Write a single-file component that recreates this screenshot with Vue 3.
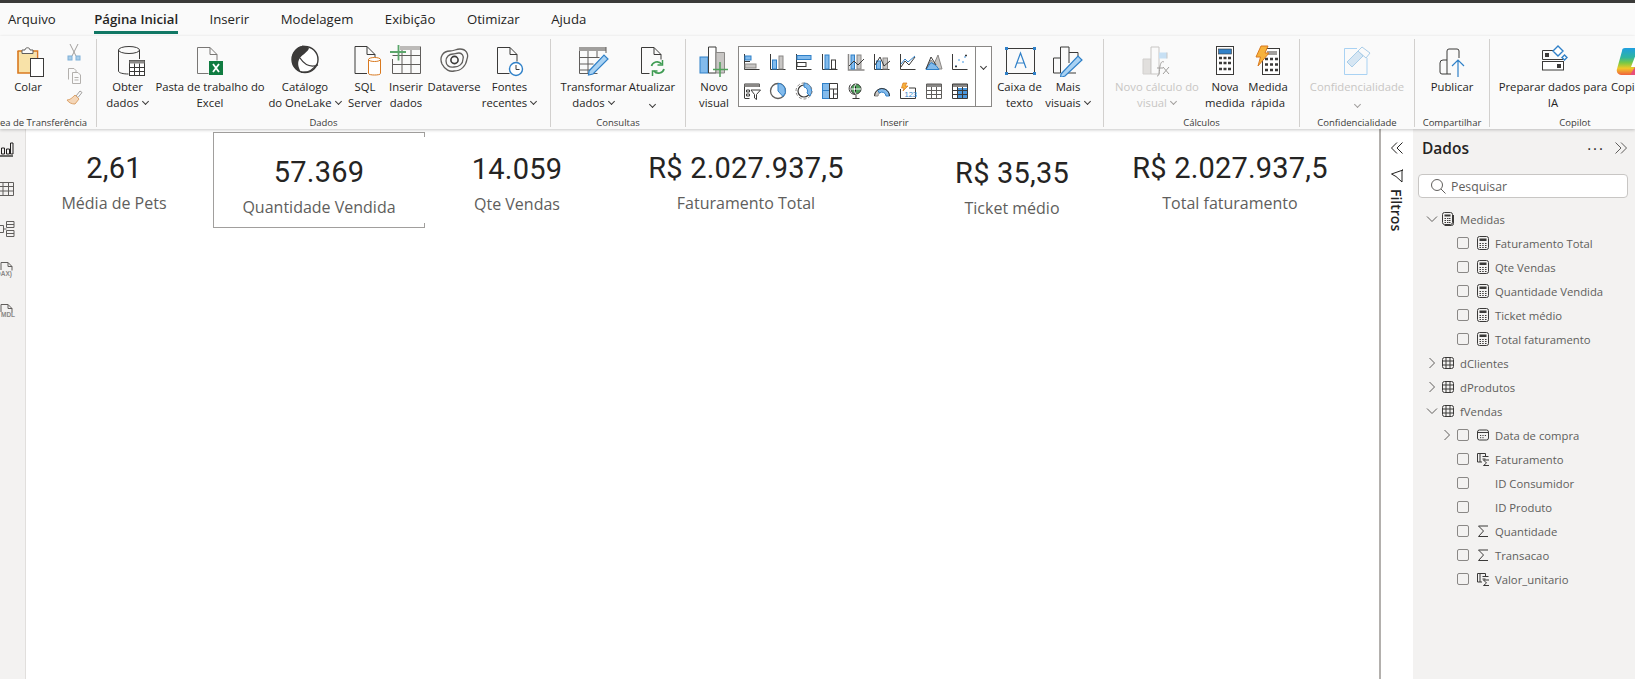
<template>
  <div class="app">
    <svg class="defs" width="0" height="0" aria-hidden="true">
      <symbol id="i-calc" viewBox="0 0 14 14">
        <rect x="1.500" y="0.500" width="11" height="13" rx="2" fill="none" stroke="#3b3a39" />
        <rect x="3.500" y="2.500" width="7" height="2.500" fill="#3b3a39" />
        <path d="M3.500 7.500h1.500M6.200 7.500h1.500M9 7.500h1.500M3.500 9.500h1.500M6.200 9.500h1.500M9 9.500h1.500M3.500 11.500h1.500M6.200 11.500h1.500M9 11.500h1.500" stroke="#3b3a39" />
      </symbol>
      <symbol id="i-calcs" viewBox="0 0 14 14">
        <rect x="1.500" y="0.500" width="10" height="12" rx="2" fill="none" stroke="#3b3a39" />
        <path d="M3.500 13.500h7a2 2 0 0 0 2-2V3" fill="none" stroke="#3b3a39" />
        <rect x="3.500" y="2.500" width="6" height="2" fill="#3b3a39" />
        <path d="M3.500 6.500h1.500M6 6.500h1.500M8 6.500h1.500M3.500 8.500h1.500M6 8.500h1.500M8 8.500h1.500M3.500 10.500h1.500M6 10.500h1.500M8 10.500h1.500" stroke="#3b3a39" />
      </symbol>
      <symbol id="i-table" viewBox="0 0 14 14">
        <rect x="1.500" y="1.500" width="11" height="11" rx="2" fill="none" stroke="#3b3a39" />
        <path d="M5 1.500v11M9 1.500v11M1.500 5h11M1.500 9h11" stroke="#3b3a39" />
      </symbol>
      <symbol id="i-date" viewBox="0 0 14 14">
        <rect x="1.500" y="2" width="11" height="10" rx="2" fill="none" stroke="#3b3a39" />
        <path d="M1.500 4.500h11M4 7.500h1.200M6.400 7.500h1.200M8.800 7.500h1.200M4 9.700h1.200M6.400 9.700h1.200" stroke="#3b3a39" />
      </symbol>
      <symbol id="i-col" viewBox="0 0 14 14">
        <path d="M1.500 10V1.500h8v3M4 10V1.500M1.500 10H6M6.500 4.500h6M6.500 7h3" fill="none" stroke="#3b3a39" />
        <path d="M13 8H7.500l3 3-3 2.500H13" fill="none" stroke="#3b3a39" />
      </symbol>
      <symbol id="i-sum" viewBox="0 0 14 14">
        <path d="M12 2H2.500l5 5-5 5.500H12" fill="none" stroke="#3b3a39" />
      </symbol>
    </svg>

    <div class="topbar"></div>

    <nav class="tabs">
      <span v-for="tab in tabs" :key="tab" class="tab" :class="{ active: tab === 'Página Inicial' }">{{ tab }}</span>
    </nav>

    <div class="ribbon">
      <section class="group g-clip">
        <div class="items">
          <div class="btn b-colar">
            <svg class="ico" width="32" height="32" viewBox="0 0 32 32">
              <path d="M6 6h18v22H6z" fill="#f8e2a8" />
              <path d="M6 6v22h12" fill="none" stroke="#d9791f" stroke-width="1.600" />
              <path d="M5.500 6H10M20 6h5.500v8" fill="none" stroke="#d9791f" stroke-width="1.600" />
              <path d="M10 8.500V5h3c0-3 5-3 5 0h3v3.500z" fill="#fafafa" stroke="#605e5c" />
              <rect x="18.500" y="13.500" width="13" height="18" fill="#fff" stroke="#3b3a39" />
            </svg>
            <div class="lbl">Colar</div>
          </div>
          <div class="small-col">
            <svg width="16" height="20" viewBox="0 0 16 20">
              <path d="M4 1l6 12M12 1L6 13" stroke="#a19f9d" fill="none" />
              <rect x="2" y="13" width="4" height="4" fill="#a9cde8" stroke="#7fb0d8" />
              <rect x="10" y="13" width="4" height="4" fill="#a9cde8" stroke="#7fb0d8" />
            </svg>
            <svg width="16" height="18" viewBox="0 0 16 18">
              <path d="M2.500 12.500V1.500H8l2 2v2" fill="none" stroke="#b3b0ad" />
              <path d="M6.500 5.500H12l2.500 2.500v8.500h-8zM8.500 10.500h4M8.500 13h4" fill="#fafafa" stroke="#b3b0ad" />
            </svg>
            <svg width="18" height="18" viewBox="0 0 18 18">
              <path d="M11 7l4-5 2 1.500-4 5z" fill="none" stroke="#a19f9d" />
              <path d="M10 6l4 4-4 5c-3 0-6-1-8-4 3 0 5-2 8-5z" fill="#f4d6b8" stroke="#dca36b" />
            </svg>
          </div>
        </div>
        <div class="group-label">Área de Transferência</div>
      </section>

      <section class="group g-dados">
        <div class="items">
          <div class="btn b-obter">
            <svg class="ico" width="36" height="32" viewBox="0 0 36 32">
              <ellipse cx="19" cy="5" rx="10.500" ry="3.500" fill="none" stroke="#3b3a39" />
              <path d="M8.500 5v21c0 2 5 3 10 3M29.500 5v9" fill="none" stroke="#3b3a39" />
              <rect x="19.500" y="15.500" width="15" height="15" fill="#fff" stroke="#3b3a39" />
              <path d="M19.500 15.500h15v3h-15z" fill="#8a8886" />
              <path d="M24.500 18.500v12M29.500 18.500v12M19.500 22.500h15M19.500 26.500h15" stroke="#3b3a39" />
            </svg>
            <div class="lbl">Obter<br />dados<i class="caret"></i></div>
          </div>
          <div class="btn b-pasta">
            <svg class="ico" width="28" height="32" viewBox="0 0 28 32">
              <path d="M1.500 28.500V2.500H14l7 7v6M14 2.500v7h7M1.500 28.500h11" fill="none" stroke="#797775" />
              <rect x="13" y="16" width="14" height="14" fill="#107c41" />
              <path d="M17 19l6 8M23 19l-6 8" stroke="#fff" stroke-width="1.800" />
            </svg>
            <div class="lbl">Pasta de trabalho do<br />Excel</div>
          </div>
          <div class="btn b-cat">
            <svg class="ico" width="32" height="32" viewBox="0 0 32 32">
              <circle cx="16" cy="14.500" r="13" fill="#fff" stroke="#3b3a39" stroke-width="1.400" />
              <path d="M13 1C7 2 3 8 3 14.500c0 6 4 11 9 12.500-3-5-4-10-1-14 3-4 8-6 9-10-2-1.500-4-2.500-7-2.500z" fill="#3b3a39" />
              <path d="M11 13c4 6 10 10 18 7M12 27c6 1 12-2 16-8" fill="none" stroke="#3b3a39" stroke-width="1.300" />
            </svg>
            <div class="lbl">Catálogo<br />do OneLake<i class="caret"></i></div>
          </div>
          <div class="btn b-sql">
            <svg class="ico" width="36" height="32" viewBox="0 0 36 32">
              <path d="M8 28.500V1.500H20l8 8v3M20 1.500v8h8M8 28.500h12" fill="none" stroke="#3b3a39" />
              <path d="M21.500 14.500v14c0 2 12 2 12 0v-14" fill="#fff" stroke="#d9791f" />
              <ellipse cx="27.500" cy="14.500" rx="6" ry="2" fill="#fff" stroke="#d9791f" />
            </svg>
            <div class="lbl">SQL<br />Server</div>
          </div>
          <div class="btn b-ins">
            <svg class="ico" width="32" height="32" viewBox="0 0 32 32">
              <path d="M10 1h20v4H10z" fill="#bdbbb9" />
              <path d="M2.500 14v14.500h28V1.500M2.500 10.500h28M2.500 19.500h28M12 5v23.500M21 5v23.500" fill="none" stroke="#605e5c" />
              <path d="M8.500 0v15.500M0 7h16" stroke="#5ba66b" stroke-width="1.800" />
            </svg>
            <div class="lbl">Inserir<br />dados</div>
          </div>
          <div class="btn b-dv">
            <svg class="ico" width="30" height="32" viewBox="0 0 30 32">
              <path d="M3 19C0 12 4 6 11 6c4 0 6-2 10-2 6 0 9 5 7 10-1 7-6 12-13 12-4 1-9-1-12-7z" fill="none" stroke="#605e5c" stroke-width="1.300" />
              <path d="M7 16c0-4 3-7 7-7 2 0 3-1 6-1 3 0 5 3 4 6 0 5-4 8-9 8-5 1-8-2-8-6z" fill="none" stroke="#605e5c" stroke-width="1.300" />
              <circle cx="15.500" cy="15" r="3.600" fill="none" stroke="#3b3a39" stroke-width="1.600" />
            </svg>
            <div class="lbl">Dataverse</div>
          </div>
          <div class="btn b-fontes">
            <svg class="ico" width="30" height="32" viewBox="0 0 30 32">
              <path d="M2.500 28.500V2.500H15l7 7v7M15 2.500v7h7M2.500 28.500h12" fill="none" stroke="#3b3a39" />
              <circle cx="21" cy="24" r="6.500" fill="#fff" stroke="#2f80c8" stroke-width="1.400" />
              <path d="M21 20v4.500h3.500" fill="none" stroke="#3b3a39" />
            </svg>
            <div class="lbl">Fontes<br />recentes<i class="caret"></i></div>
          </div>
        </div>
        <div class="group-label">Dados</div>
      </section>

      <section class="group g-cons">
        <div class="items">
          <div class="btn b-trans">
            <svg class="ico" width="32" height="32" viewBox="0 0 32 32">
              <path d="M1 2h27v4H1z" fill="#a19f9d" />
              <path d="M1.500 6v22.500h18M1.500 12.500h20M1.500 19h14M1.500 25h14M10 6v22M19 6v6M28 2v6" fill="none" stroke="#605e5c" />
              <path d="M11 26l15-16 4 4-15 15-4.500 1z" fill="#a9d2f3" stroke="#2f80c8" stroke-width="1.200" />
            </svg>
            <div class="lbl">Transformar<br />dados<i class="caret"></i></div>
          </div>
          <div class="btn b-atual">
            <svg class="ico" width="30" height="32" viewBox="0 0 30 32">
              <path d="M4.500 28.500V2.500H17l7 7v5M17 2.500v7h7M4.500 28.500h8" fill="none" stroke="#3b3a39" />
              <path d="M14.500 21c1-4 7-6 10-2M27 24c-1 4-7 6-10 2" fill="none" stroke="#3e9b52" stroke-width="1.700" />
              <path d="M25.500 15v5h-5M15.500 31v-5h5" fill="none" stroke="#3e9b52" stroke-width="1.500" />
            </svg>
            <div class="lbl">Atualizar<br /><i class="caret solo"></i></div>
          </div>
        </div>
        <div class="group-label">Consultas</div>
      </section>

      <section class="group g-ins">
        <div class="items">
          <div class="btn b-novo">
            <svg class="ico" width="30" height="32" viewBox="0 0 30 32">
              <rect x="1" y="12" width="8" height="16" fill="#83bbec" stroke="#2f80c8" />
              <path d="M9.500 28V2h7.500v26z" fill="#fff" stroke="#3b3a39" />
              <path d="M17 7.500h8.500V28H17z" fill="#c8c6c4" stroke="#8a8886" />
              <path d="M21 17v15M14 24.500h15" stroke="#4fa05a" stroke-width="1.500" />
            </svg>
            <div class="lbl">Novo<br />visual</div>
          </div>
          <div class="gallery">
            <div class="gal-grid">
              <svg v-for="(g, i) in gallery" :key="i" width="18" height="18" viewBox="0 0 18 18" v-html="g"></svg>
            </div>
            <div class="gal-more"><i class="caret solo"></i></div>
          </div>
          <div class="btn b-caixa">
            <svg class="ico" width="32" height="32" viewBox="0 0 32 32">
              <rect x="2.500" y="3.500" width="28" height="25" fill="none" stroke="#3b3a39" />
              <path d="M1 2h3v3H1zM29 2h3v3h-3zM1 27h3v3H1zM29 27h3v3h-3z" fill="#2f80c8" />
              <path d="M11 23l5.500-15 5.500 15M13 18h7" fill="none" stroke="#2f80c8" stroke-width="1.200" />
            </svg>
            <div class="lbl">Caixa de<br />texto</div>
          </div>
          <div class="btn b-mais">
            <svg class="ico" width="32" height="32" viewBox="0 0 32 32">
              <path d="M1.500 28V13h7v15zM8.500 28V2h8.500v16M17 7.500h9V16M24 28H13" fill="none" stroke="#3b3a39" />
              <path d="M9 29l17-18 4 4-17 16-4.500 1.500z" fill="#a9d2f3" stroke="#2f80c8" stroke-width="1.200" />
            </svg>
            <div class="lbl">Mais<br />visuais<i class="caret"></i></div>
          </div>
        </div>
        <div class="group-label">Inserir</div>
      </section>

      <section class="group g-calc">
        <div class="items">
          <div class="btn b-ncalc off">
            <svg class="ico" width="30" height="32" viewBox="0 0 30 32">
              <path d="M1 14h8v15H1z" fill="#e1dfdd" stroke="#d2d0ce" />
              <path d="M9 29V2h8v27z" fill="#fafafa" stroke="#c8c6c4" />
              <path d="M17 7.500h8v6h-8z" fill="#c7e0f4" />
              <path d="M25 7.500v6" stroke="#c8c6c4" />
              <path d="M15 31c3 0 2-5 3-10 1-4 2-5 4-4M15 23h6M21 22l6 7M27 22l-6 7" fill="none" stroke="#a19f9d" />
            </svg>
            <div class="lbl">Novo cálculo do<br />visual<i class="caret"></i></div>
          </div>
          <div class="btn b-nmed">
            <svg class="ico" width="22" height="32" viewBox="0 0 22 32">
              <rect x="2.500" y="1.500" width="17" height="28" fill="#fff" stroke="#3b3a39" />
              <rect x="4.500" y="4" width="13" height="5" fill="#2f80c8" stroke="#3b3a39" stroke-width="0.600" />
              <path d="M5 13h3M9.500 13h3M14 13h3M5 18h3M9.500 18h3M14 18h3M5 24h3M9.500 24h3M14 24h3" stroke="#3b3a39" stroke-width="2.400" />
            </svg>
            <div class="lbl">Nova<br />medida</div>
          </div>
          <div class="btn b-mrap">
            <svg class="ico" width="26" height="32" viewBox="0 0 26 32">
              <rect x="7.500" y="3.500" width="17" height="26" fill="#fff" stroke="#3b3a39" />
              <rect x="12" y="6" width="10" height="4" fill="#a19f9d" />
              <path d="M10 14h3M15 14h3M20 14h3M10 19.500h3M15 19.500h3M20 19.500h3M10 25h3M15 25h3M20 25h3" stroke="#3b3a39" stroke-width="2.400" />
              <path d="M6 1h7l-3 7h4L3 21l2.500-9H1z" fill="#f7b23b" stroke="#d9791f" />
            </svg>
            <div class="lbl">Medida<br />rápida</div>
          </div>
        </div>
        <div class="group-label">Cálculos</div>
      </section>

      <section class="group g-conf">
        <div class="items">
          <div class="btn b-conf off">
            <svg class="ico" width="30" height="32" viewBox="0 0 30 32">
              <path d="M2.500 3.500H15M25 13v16.500H2.500v-26" fill="none" stroke="#a9d2f3" />
              <path d="M5 17l11-11 5 5-11 11z" fill="#d6e6f3" stroke="#a9cde8" />
              <path d="M16 6l4-4 8 6-4 5z" fill="#fafafa" stroke="#a9cde8" />
            </svg>
            <div class="lbl">Confidencialidade<br /><i class="caret solo"></i></div>
          </div>
        </div>
        <div class="group-label">Confidencialidade</div>
      </section>

      <section class="group g-pub">
        <div class="items">
          <div class="btn b-pub">
            <svg class="ico" width="30" height="32" viewBox="0 0 30 32">
              <path d="M10 15h-4a3 3 0 0 0-3 3v9a2 2 0 0 0 2 2h9M10 15v14M10 15V6a2 2 0 0 1 2-2h8a2 2 0 0 1 2 2v7" fill="none" stroke="#3b3a39" />
              <path d="M21 15v17M15 21l6-6 6 6" fill="none" stroke="#2f80c8" stroke-width="1.200" />
            </svg>
            <div class="lbl">Publicar</div>
          </div>
        </div>
        <div class="group-label">Compartilhar</div>
      </section>

      <section class="group g-cop">
        <div class="items">
          <div class="btn b-prep">
            <svg class="ico" width="30" height="32" viewBox="0 0 30 32">
              <path d="M16 5.500H4.500v9H25" fill="none" stroke="#3b3a39" />
              <rect x="4.500" y="16.500" width="21" height="8.500" fill="#fff" stroke="#3b3a39" />
              <rect x="7" y="8" width="4" height="4" fill="#3b3a39" />
              <rect x="19" y="19" width="4" height="4" fill="#3b3a39" />
              <path d="M20 1l5 5-5 5-5-5zM26.500 10l2.500 2.500-2.500 2.500-2.500-2.500z" fill="#fff" stroke="#2f80c8" stroke-width="1.400" />
            </svg>
            <div class="lbl">Preparar dados para<br />IA</div>
          </div>
          <div class="btn b-copilot">
            <svg class="ico ico-cop" width="30" height="32" viewBox="0 0 30 32">
              <defs>
                <linearGradient id="cop" x1="0" y1="0" x2="0" y2="1">
                  <stop offset="0" stop-color="#1f9fe0" />
                  <stop offset="0.350" stop-color="#2fb5a0" />
                  <stop offset="0.550" stop-color="#7ac943" />
                  <stop offset="0.750" stop-color="#f0c828" />
                  <stop offset="1" stop-color="#f0603c" />
                </linearGradient>
              </defs>
              <path d="M9 3h18c2 0 3 2 2 4l-7 20c-1 2-3 3-5 3H5c-3 0-5-3-4-6L6 6c0-2 1-3 3-3z" fill="url(#cop)" />
              <path d="M20 9l-5 13h4l5-13z" fill="#fff" />
              <path d="M14 30l5-8 5-1-2 6c-1 2-3 3-5 3z" fill="#e84f7a" />
            </svg>
            <div class="lbl">Copilot</div>
          </div>
        </div>
        <div class="group-label">Copilot</div>
      </section>
    </div>

    <div class="main">
      <aside class="rail">
        <svg width="16" height="16" viewBox="0 0 16 16">
          <path d="M1.500 13V7h3v6zM6.500 13V8h3v5zM10.500 13V2h2.500v11z" fill="none" stroke="#201f1e" />
          <path d="M0 15h13" stroke="#201f1e" stroke-width="1.300" />
        </svg>
        <svg width="16" height="16" viewBox="0 0 16 16">
          <path d="M-2 1.500h15.500v13H-2M-2 5.500h15.500M-2 10h15.500M3 1.500v13M8.500 1.500v13" fill="none" stroke="#605e5c" />
        </svg>
        <svg width="16" height="16" viewBox="0 0 16 16">
          <path d="M6.500 0.500h7.500v6h-7.500zM6.500 3.500h7.500M6.500 9.500h7.500v6h-7.500zM6.500 12.500h7.500M0 4.500h3.500v7H0M3.500 8h3" fill="none" stroke="#605e5c" />
        </svg>
        <svg width="16" height="18" viewBox="0 0 16 18">
          <path d="M1 9V1.500h7l4 4v4M8 1.500v4h4" fill="none" stroke="#605e5c" />
          <text x="-4" y="15" class="rail-txt">DAX)</text>
        </svg>
        <svg width="16" height="18" viewBox="0 0 16 18">
          <path d="M1 9V1.500h7l4 4v4M8 1.500v4h4" fill="none" stroke="#605e5c" />
          <text x="1" y="14" class="rail-txt">MDL</text>
        </svg>
      </aside>

      <div class="canvas">
        <div
          v-for="card in cards"
          :key="card.label"
          class="card"
          :class="{ selected: card.selected }"
          :style="{ left: card.x + 'px', top: card.y + 'px' }"
        >
          <div class="card-value">{{ card.value }}</div>
          <div class="card-label">{{ card.label }}</div>
        </div>
      </div>

      <aside class="filters">
        <svg width="14" height="14" viewBox="0 0 14 14">
          <path d="M7 1.500L1.500 7 7 12.500M12.500 1.500L7 7l5.500 5.500" fill="none" stroke="#252423" />
        </svg>
        <svg class="funnel" width="14" height="14" viewBox="0 0 14 14">
          <path d="M13 1L1.500 5l4.500 2.500L12 13V1z" fill="none" stroke="#252423" />
        </svg>
        <span class="filters-txt">Filtros</span>
      </aside>

      <aside class="data">
        <div class="data-head">
          <span class="data-title">Dados</span>
          <span class="dots">···</span>
          <svg width="14" height="14" viewBox="0 0 14 14">
            <path d="M1.500 1.500L7 7l-5.500 5.500M7 1.500L12.500 7 7 12.500" fill="none" stroke="#605e5c" />
          </svg>
        </div>
        <div class="search">
          <svg width="16" height="16" viewBox="0 0 16 16">
            <circle cx="7" cy="7" r="5.500" fill="none" stroke="#605e5c" />
            <path d="M11 11l4.500 4.500" stroke="#605e5c" />
          </svg>
          <span>Pesquisar</span>
        </div>
        <ul class="tree">
          <li v-for="row in rows" :key="row.label + row.level" class="row" :class="row.level === 0 ? 'lv0' : 'lv1'">
            <span class="chev">
              <svg v-if="row.open === true" width="12" height="12" viewBox="0 0 12 12">
                <path d="M1 3.500l5 5 5-5" fill="none" stroke="#605e5c" />
              </svg>
              <svg v-else-if="row.open === false" width="12" height="12" viewBox="0 0 12 12">
                <path d="M3.500 1l5 5-5 5" fill="none" stroke="#605e5c" />
              </svg>
            </span>
            <span v-if="row.level === 1" class="check"></span>
            <svg class="tree-ico" width="14" height="14">
              <use v-if="row.icon" :href="'#i-' + row.icon" />
            </svg>
            <span class="row-label">{{ row.label }}</span>
          </li>
        </ul>
      </aside>
    </div>
  </div>
</template>

<script setup>
const tabs = ['Arquivo', 'Página Inicial', 'Inserir', 'Modelagem', 'Exibição', 'Otimizar', 'Ajuda']

const cards = [
  { value: '2,61', label: 'Média de Pets', x: -18, y: -1 },
  { value: '57.369', label: 'Quantidade Vendida', x: 187, y: 3, selected: true },
  { value: '14.059', label: 'Qte Vendas', x: 385, y: 0 },
  { value: 'R$ 2.027.937,5', label: 'Faturamento Total', x: 614, y: -1 },
  { value: 'R$ 35,35', label: 'Ticket médio', x: 880, y: 4 },
  { value: 'R$ 2.027.937,5', label: 'Total faturamento', x: 1098, y: -1 },
]

const rows = [
  { label: 'Medidas', level: 0, open: true, icon: 'calcs' },
  { label: 'Faturamento Total', level: 1, icon: 'calc' },
  { label: 'Qte Vendas', level: 1, icon: 'calc' },
  { label: 'Quantidade Vendida', level: 1, icon: 'calc' },
  { label: 'Ticket médio', level: 1, icon: 'calc' },
  { label: 'Total faturamento', level: 1, icon: 'calc' },
  { label: 'dClientes', level: 0, open: false, icon: 'table' },
  { label: 'dProdutos', level: 0, open: false, icon: 'table' },
  { label: 'fVendas', level: 0, open: true, icon: 'table' },
  { label: 'Data de compra', level: 1, open: false, icon: 'date' },
  { label: 'Faturamento', level: 1, icon: 'col' },
  { label: 'ID Consumidor', level: 1 },
  { label: 'ID Produto', level: 1 },
  { label: 'Quantidade', level: 1, icon: 'sum' },
  { label: 'Transacao', level: 1, icon: 'sum' },
  { label: 'Valor_unitario', level: 1, icon: 'col' },
]

const D = 'fill="none" stroke="#3b3a39"'
const B = 'fill="#83bbec" stroke="#2f80c8"'
const G = 'fill="#c8c6c4" stroke="#8a8886"'

const gallery = [
  `<path d="M1.500 1v15.500h15" ${D}/><rect x="2" y="3" width="6" height="4" ${B}/><rect x="2" y="11" width="11" height="4" ${G}/><path d="M2 8.500h5" ${D}/>`,
  `<path d="M1.500 1v15.500h15" ${D}/><rect x="3.500" y="7" width="4" height="9" ${B}/><rect x="10" y="3" width="4" height="13" ${G}/>`,
  `<path d="M1.500 1v15.500h15" ${D}/><rect x="2" y="2.500" width="14" height="4" ${B}/><rect x="2" y="9.500" width="9" height="4" fill="#fff" stroke="#3b3a39"/>`,
  `<path d="M1.500 1v15.500h15" ${D}/><rect x="4" y="2" width="4" height="14" ${B}/><rect x="10.500" y="7" width="4" height="9" fill="#fff" stroke="#3b3a39"/>`,
  `<path d="M1.500 1v16h16" fill="none" stroke="#8a8886" stroke-width="1.500"/><rect x="4" y="2" width="3.500" height="14" ${B}/><rect x="10" y="2" width="4" height="14" ${G}/><path d="M2 13l5-5 4 4 6-6" ${D}/>`,
  `<path d="M1.500 1v15.500h15" ${D}/><rect x="3.500" y="8" width="4" height="8" ${B}/><rect x="10" y="5" width="4.500" height="11" ${G}/><path d="M2 12l5-8 4 9 6-5" ${D}/>`,
  `<path d="M1.500 1v15.500h15" ${D}/><path d="M2 11l4-5 3 3 7-6" fill="none" stroke="#2f80c8"/><path d="M2 14l4-6 4 4 6-8" ${D}/>`,
  `<path d="M1 16l5-9 3 4 4-9 4 14z" ${G}/><path d="M1 16.500l5-7 5 3 3 4z" ${B}/><path d="M1 16L6 4l5 8" ${D}/>`,
  `<path d="M1.500 1v15.500h15" ${D}/><path d="M4 13h2M7 7h2M11 9h2M13 4h2" stroke="#83bbec" stroke-width="1.500"/><path d="M4 13.500h2M14 2.500h2" stroke="#3b3a39" stroke-width="1.500"/>`,
  `<path d="M1.500 16V2h15v3" ${D}/><path d="M1.500 2h15v3h-15z" fill="#8a8886"/><path d="M1.500 16.500h5M3.500 8h3v2h-3zM3.500 12h3v2h-3z" ${D}/><path d="M8 8h9.500l-4 4.500v5l-2-1.500v-3.500z" fill="#fff" stroke="#3b3a39"/>`,
  `<circle cx="9" cy="9" r="7.500" fill="#fff" stroke="#605e5c" stroke-width="1.300"/><path d="M9 1.500A7.500 7.500 0 0 1 14 14.500L9 9z" ${B}/>`,
  `<circle cx="9" cy="9" r="6" fill="none" stroke="#3b3a39" stroke-width="1.200"/><path d="M9 1a8 8 0 0 1 6 13l-3-3a4 4 0 0 0-3-6z" ${B}/><circle cx="9" cy="9" r="8" fill="none" stroke="#8a8886" stroke-dasharray="3 2"/>`,
  `<rect x="1.500" y="1.500" width="7" height="15" ${B}/><path d="M1.500 8.500h7" stroke="#2f80c8"/><path d="M8.500 1.500h8v15h-8zM8.500 7h8M12.500 7v9.500M12.500 12h4" ${D}/>`,
  `<circle cx="9" cy="7" r="5" fill="#4fa05a" stroke="#3b3a39"/><path d="M9 2c-2 2-2 8 0 10M4 7h10" stroke="#fff"/><path d="M3.500 2.500c-3 4-1 10 5 10M9 13v3M5.500 16.500h7" ${D}/>`,
  `<path d="M1.500 14a7.500 7.500 0 0 1 3-6l2 3a4 4 0 0 0-1.500 3z" ${G}/><path d="M4.500 8a7.500 7.500 0 0 1 12 6h-3.500a4 4 0 0 0-6.500-3z" ${B}/><path d="M1.500 14a7.500 7.500 0 0 1 15 0" ${D}/>`,
  `<path d="M1.500 7v9.500h15V6H10" ${D}/><path d="M4 1h4L6 4h3L4 9l1-3H2.500z" fill="#f7b23b" stroke="#d9791f" stroke-width="0.700"/><text x="5.500" y="15" font-size="7.500" font-family="Liberation Sans" fill="#2f80c8">123</text>`,
  `<path d="M1.500 2h15v3h-15z" fill="#8a8886"/><path d="M1.500 2h15v14.500h-15zM6.500 5v11.500M11.500 5v11.500M1.500 8.500h15M1.500 12.500h15" fill="none" stroke="#605e5c"/>`,
  `<path d="M1.500 2h15v3h-15z" fill="#8a8886"/><path d="M6 6h10.500v10.500H6z" fill="#4a97dc"/><path d="M1.500 2h15v14.500h-15zM6.500 5v11.500M11.500 5v11.500M1.500 8.500h15M1.500 12.500h15" fill="none" stroke="#3b3a39"/>`,
]
</script>

<style>
html,
body {
  margin: 0;
  height: 100%;
  overflow: hidden;
  background: #fff;
}
</style>

<style scoped>
.app {
  width: 1635px;
  height: 679px;
  display: flex;
  flex-direction: column;
  overflow: hidden;
  font-family: 'Open Sans', 'Liberation Sans', sans-serif;
  color: #252423;
}

.defs {
  position: absolute;
}

.topbar {
  height: 3px;
  background: #3b3a39;
  flex-shrink: 0;
}

.tabs {
  height: 33px;
  display: flex;
  background: #fafafa;
  flex-shrink: 0;
  padding-left: 8px;
  box-sizing: border-box;
}

.tab {
  height: 30px;
  padding-top: 1px;
  line-height: 31px;
  font-size: 13.200px;
  margin-right: 31.500px;
}

.tab.active {
  font-weight: 600;
  border-bottom: 3px solid #117865;
  height: 27px;
  margin-left: 7px;
}

.ribbon {
  height: 93px;
  display: flex;
  background: #fafafa;
  flex-shrink: 0;
  overflow: hidden;
  padding-top: 3px;
  box-sizing: border-box;
  position: relative;
  z-index: 2;
  box-shadow: 0 1px 3px rgba(0, 0, 0, 0.22);
}

.group {
  height: 88px;
  border-right: 1px solid #d2d0ce;
  flex-shrink: 0;
  box-sizing: border-box;
  display: flex;
  flex-direction: column;
}

.items {
  display: flex;
  height: 76px;
}

.group-label {
  height: 12px;
  line-height: 15px;
  font-size: 9.500px;
  text-align: center;
  color: #3b3a39;
  white-space: nowrap;
}

.g-clip {
  width: 97px;
}

.g-clip .group-label {
  text-align: right;
  padding-right: 10px;
  margin-left: -10px;
}

.g-dados {
  width: 454px;
  padding-left: 3px;
}

.g-cons {
  width: 135px;
  padding-left: 10px;
}

.g-cons .group-label {
  margin-left: -10px;
}

.g-ins {
  width: 418px;
  padding-left: 3px;
}

.g-ins .group-label {
  margin-left: -3px;
}

.g-calc {
  width: 196px;
  padding-left: 8px;
}

.g-calc .group-label {
  margin-left: -8px;
}

.g-conf {
  width: 115px;
}

.g-pub {
  width: 75px;
}

.g-cop {
  width: 170px;
  border-right: none;
  padding-left: 8px;
}

.g-cop .group-label {
  margin-left: -8px;
}

.g-dados .group-label {
  margin-left: -3px;
}

.btn {
  flex-shrink: 0;
  display: flex;
  flex-direction: column;
  align-items: center;
  text-align: center;
}

.ico {
  height: 32px;
  margin-top: 6px;
  margin-bottom: 2px;
  flex-shrink: 0;
}

.ico-cop {
  margin-left: 5px;
}

.lbl {
  font-size: 11.300px;
  line-height: 16px;
  white-space: nowrap;
}

.off .lbl {
  color: #c8c6c4;
}

.caret {
  display: inline-block;
  width: 4px;
  height: 4px;
  border-right: 1px solid #3b3a39;
  border-bottom: 1px solid #3b3a39;
  transform: rotate(45deg);
  margin: 0 1px 3px 4px;
}

.caret.solo {
  margin: 0;
}

.off .caret {
  border-color: #a19f9d;
}

.b-colar { width: 56px; }
.small-col {
  width: 30px;
  display: flex;
  flex-direction: column;
  align-items: center;
  gap: 4px;
  padding-top: 4px;
  margin-left: 3px;
}
.b-obter { width: 55px; }
.b-pasta { width: 110px; }
.b-cat { width: 80px; }
.b-sql { width: 40px; }
.b-ins { width: 42px; }
.b-dv { width: 54px; }
.b-fontes { width: 57px; }
.b-trans { width: 65px; }
.b-atual { width: 52px; }
.b-novo { width: 50px; }
.b-caixa { width: 51px; margin-left: 2px; }
.b-mais { width: 46px; }
.b-ncalc { width: 90px; }
.b-nmed { width: 42px; margin-left: 2px; }
.b-mrap { width: 42px; margin-left: 1px; }
.b-conf { width: 114px; }
.b-pub { width: 74px; }
.b-prep { width: 110px; }
.b-copilot { width: 44px; align-items: flex-start; margin-left: 3px; }

.gallery {
  width: 254px;
  height: 61px;
  margin-top: 7px;
  box-sizing: border-box;
  border: 1px solid #8a8886;
  display: flex;
  background: #fff;
  margin-left: -1px;
}

.gal-grid {
  width: 236px;
  display: grid;
  grid-template-columns: repeat(9, 26px);
  grid-auto-rows: 29px;
  align-items: center;
  justify-items: center;
  align-content: center;
  border-right: 1px solid #8a8886;
}

.gal-more {
  flex: 1;
  text-align: center;
  padding-top: 12px;
  line-height: 8px;
}

.main {
  flex: 1;
  display: flex;
  min-height: 0;
}

.rail {
  width: 26px;
  flex-shrink: 0;
  box-sizing: border-box;
  background: #f3f2f1;
  border-right: 1px solid #e1dfdd;
  display: flex;
  flex-direction: column;
  gap: 24px;
  padding-top: 12px;
  overflow: hidden;
}

.rail svg {
  flex-shrink: 0;
  overflow: visible;
}

.rail-txt {
  font-size: 6.500px;
  font-weight: 700;
  font-family: 'Liberation Sans', sans-serif;
  fill: #8a8886;
}

.canvas {
  flex: 1;
  position: relative;
  background: #fff;
}

.card {
  position: absolute;
  width: 212px;
  height: 96px;
  box-sizing: border-box;
  padding-top: 21px;
  border: 1px solid transparent;
  text-align: center;
  display: flex;
  flex-direction: column;
  gap: 5px;
}

.card.selected {
  border-color: #a19f9d;
  border-right-color: transparent;
}

.card.selected::before,
.card.selected::after {
  content: '';
  position: absolute;
  right: -1px;
  width: 1px;
  height: 5px;
  background: #a19f9d;
}

.card.selected::before {
  top: -1px;
}

.card.selected::after {
  bottom: -1px;
}

.card-value {
  font-family: Roboto, 'Liberation Sans', sans-serif;
  font-size: 29px;
  line-height: 36px;
  letter-spacing: 0.200px;
  color: #252423;
  white-space: nowrap;
}

.card-label {
  font-size: 16px;
  line-height: 24px;
  color: #605e5c;
  white-space: nowrap;
}

.filters {
  width: 34px;
  flex-shrink: 0;
  box-sizing: border-box;
  border-left: 2px solid #b3b0ad;
  background: #fff;
  display: flex;
  flex-direction: column;
  align-items: center;
  padding-top: 12px;
}

.funnel {
  margin-top: 14px;
}

.filters-txt {
  writing-mode: vertical-rl;
  font-size: 14px;
  font-weight: 600;
  margin-top: 6px;
  margin-left: -1px;
  color: #252423;
}

.data {
  width: 222px;
  flex-shrink: 0;
  box-sizing: border-box;
  background: #f3f2f1;
  padding: 0 7px 0 5px;
}

.data-head {
  height: 45px;
  display: flex;
  align-items: flex-start;
  padding-left: 4px;
  padding-top: 9px;
  box-sizing: border-box;
}

.data-title {
  font-size: 15.500px;
  line-height: 20px;
  font-weight: 600;
  flex: 1;
}

.data-head svg {
  margin-top: 3px;
}

.dots {
  font-size: 15px;
  line-height: 20px;
  font-weight: 400;
  letter-spacing: 2px;
  margin-right: 9px;
  color: #252423;
}

.search {
  height: 24px;
  box-sizing: border-box;
  background: #fff;
  border: 1px solid #c8c6c4;
  border-radius: 4px;
  display: flex;
  align-items: center;
  gap: 5px;
  padding-left: 11px;
  font-size: 12.300px;
  color: #605e5c;
}

.tree {
  list-style: none;
  margin: 9px 0 0;
  padding: 0;
}

.row {
  height: 24px;
  display: flex;
  align-items: center;
  font-size: 11.300px;
  color: #605e5c;
  white-space: nowrap;
}

.chev {
  display: flex;
  width: 12px;
  height: 12px;
}

.lv0 {
  padding-left: 8px;
}

.lv0 .tree-ico {
  margin-left: 3px;
  margin-right: 5px;
}

.lv1 {
  padding-left: 23px;
}

.check {
  width: 12px;
  height: 12px;
  box-sizing: border-box;
  border: 1px solid #8a8886;
  border-radius: 2px;
  margin-left: 4px;
  background: #f3f2f1;
}

.lv1 .tree-ico {
  margin-left: 7px;
  margin-right: 5px;
}
</style>
